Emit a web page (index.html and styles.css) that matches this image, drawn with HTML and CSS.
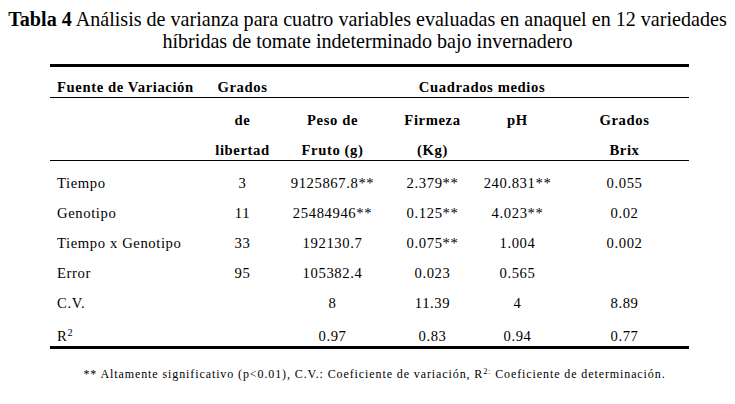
FILE: index.html
```html
<!DOCTYPE html>
<html lang="es">
<head>
<meta charset="utf-8">
<link rel="stylesheet" href="styles.css">
</head>
<body>
<h1 class="title"><b>Tabla 4</b> Análisis de varianza para cuatro variables evaluadas en anaquel en 12 variedades<br>híbridas de tomate indeterminado bajo invernadero</h1>
<table class="anova">
  <colgroup>
    <col class="c1"><col class="c2"><col class="c3"><col class="c4"><col class="c5"><col class="c6">
  </colgroup>
  <thead>
    <tr class="h1">
      <th class="left">Fuente de Variación</th>
      <th>Grados</th>
      <th colspan="4" class="cm">Cuadrados medios</th>
    </tr>
    <tr class="h2">
      <th></th><th>de</th><th>Peso de</th><th>Firmeza</th><th>pH</th><th>Grados</th>
    </tr>
    <tr class="h3">
      <th></th><th>libertad</th><th>Fruto (g)</th><th>(Kg)</th><th></th><th>Brix</th>
    </tr>
  </thead>
  <tbody>
    <tr class="first">
      <td class="left">Tiempo</td><td>3</td><td>9125867.8**</td><td>2.379**</td><td>240.831**</td><td>0.055</td>
    </tr>
    <tr>
      <td class="left">Genotipo</td><td>11</td><td>25484946**</td><td>0.125**</td><td>4.023**</td><td>0.02</td>
    </tr>
    <tr>
      <td class="left">Tiempo x Genotipo</td><td>33</td><td>192130.7</td><td>0.075**</td><td>1.004</td><td>0.002</td>
    </tr>
    <tr>
      <td class="left">Error</td><td>95</td><td>105382.4</td><td>0.023</td><td>0.565</td><td></td>
    </tr>
    <tr>
      <td class="left">C.V.</td><td></td><td>8</td><td>11.39</td><td>4</td><td>8.89</td>
    </tr>
    <tr class="last">
      <td class="left">R<sup>2</sup></td><td></td><td>0.97</td><td>0.83</td><td>0.94</td><td>0.77</td>
    </tr>
  </tbody>
</table>
<p class="note">** Altamente significativo (p&lt;0.01), C.V.: Coeficiente de variación, R<sup>2</sup><sup class="colon">:</sup> Coeficiente de determinación.</p>
</body>
</html>
```
FILE: styles.css
```css
body {
  margin: 8px;
  color: #000;
  background: #fff;
  font-family: "Liberation Serif", "Times New Roman", serif;
}
.title {
  margin: 0;
  font-size: 20.1px;
  font-weight: normal;
  text-align: center;
  line-height: 22px;
}
.title b {
  font-weight: bold;
}
.anova {
  margin: 12px 0 0 42px;
  width: 639px;
  border-collapse: collapse;
  table-layout: fixed;
  font-size: 14.67px;
  letter-spacing: 0.6px;
  border-top: 3px solid #000;
  border-bottom: 3px solid #000;
}
.c1 { width: 160px; }
.c2 { width: 65px; }
.c3 { width: 115px; }
.c4 { width: 85px; }
.c5 { width: 85px; }
.c6 { width: 129px; }
.anova th, .anova td {
  padding: 10px 0 0 0;
  line-height: 20px;
  text-align: center;
  white-space: nowrap;
  vertical-align: top;
}
.anova th {
  font-weight: bold;
}
.anova .left {
  text-align: left;
  padding-left: 7px;
}
.h1 th {
  padding-top: 10px;
  border-bottom: 1px solid #000;
}
.h2 th {
  padding-top: 12px;
}
.h3 th {
  padding-top: 10px;
  border-bottom: 1px solid #000;
}
.first td {
  padding-top: 12px;
}
.last td {
  padding-top: 13px;
}
sup {
  font-size: 0.7em;
  line-height: 0;
  vertical-align: 0.5em;
}
.note {
  margin: 18px 0 0 0;
  padding-left: 14px;
  font-size: 12px;
  letter-spacing: 0.9px;
  line-height: 14px;
  text-align: center;
}
.note .colon {
  font-size: 0.6em;
}
```
